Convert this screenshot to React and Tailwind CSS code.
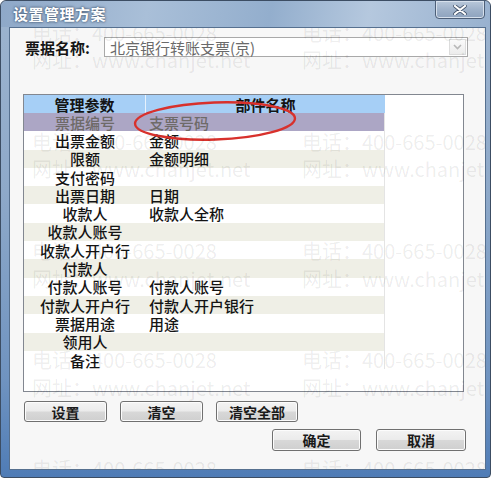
import React from "react"

const rows = [
  ["票据编号", "支票号码"],
  ["出票金额", "金额"],
  ["限额", "金额明细"],
  ["支付密码", ""],
  ["出票日期", "日期"],
  ["收款人", "收款人全称"],
  ["收款人账号", ""],
  ["收款人开户行", ""],
  ["付款人", ""],
  ["付款人账号", "付款人账号"],
  ["付款人开户行", "付款人开户银行"],
  ["票据用途", "用途"],
  ["领用人", ""],
  ["备注", ""],
]

const font = { fontFamily: '"Noto Sans CJK SC", "DejaVu Sans", sans-serif' }

function VistaButton({ children, className = "" }) {
  return (
    <button
      className={`flex items-center justify-center rounded-[3px] border border-[#707070] bg-[linear-gradient(#f3f3f3_0%,#ebebeb_48%,#d8d8d8_52%,#cfcfcf_100%)] text-[14px] font-bold leading-none text-[#1a1a1a] shadow-[inset_0_0_0_1px_#fcfcfc] ${className}`}
    >
      {children}
    </button>
  )
}

function Watermarks() {
  const phoneTops = [-7, 102, 211, 320, 429]
  const webTops = [20, 129, 239, 348]
  const xs = [22, 292]
  return (
    <div className="pointer-events-none absolute inset-0 z-20 overflow-hidden text-[20px] leading-[24px] text-black/[0.08]">
      {phoneTops.map((t) =>
        xs.map((x) => (
          <div key={`p${t}${x}`} className="absolute whitespace-nowrap" style={{ top: t, left: x }}>
            电话：400-665-0028
          </div>
        )),
      )}
      {webTops.map((t) =>
        xs.map((x) => (
          <div key={`w${t}${x}`} className="absolute whitespace-nowrap" style={{ top: t, left: x }}>
            网址：www.chanjet.net
          </div>
        )),
      )}
    </div>
  )
}

export default function App() {
  return (
    <div className="h-[481px] w-[494px] bg-white" style={font}>
      <div className="flex h-[478px] w-[491px] flex-col rounded-t-[6px] rounded-b-[4px] border border-[#3c4d63] bg-[linear-gradient(180deg,#9db4cf_0%,#8ea9c9_40%,#6f93c0_80%,#4f7cb6_100%)] pl-[8px] pr-[4px] pb-[7px]">
        {/* title bar */}
        <div className="relative flex h-[26px] shrink-0 items-center bg-[linear-gradient(100deg,#8ea8c8_0%,#a9bfd8_30%,#93aecd_55%,#b5c8de_75%,#98b1cf_100%)] -mr-[4px] -ml-[8px] pl-[12px] rounded-t-[6px]">
          <span className="text-[15px] font-bold tracking-[0.5px] text-white [text-shadow:0_0_3px_#4a5f7a,0_0_2px_#4a5f7a]">
            设置管理方案
          </span>
          <div className="absolute right-[5px] top-[-1px] flex h-[19px] w-[50px] items-center justify-center rounded-b-[4px] border border-[#4d5f78] bg-[linear-gradient(#b9c8da_0%,#9fb2ca_50%,#8ea3be_100%)] shadow-[inset_0_0_0_1px_#d6e0ec]">
            <svg width="14" height="10" viewBox="0 0 14 10">
              <path d="M2 1 L12 9 M12 1 L2 9" stroke="#3f4f66" strokeWidth="3.6" strokeLinecap="round" />
              <path d="M2 1 L12 9 M12 1 L2 9" stroke="#ffffff" strokeWidth="2.2" strokeLinecap="round" />
            </svg>
          </div>
        </div>

        {/* client area */}
        <div className="relative flex h-[443px] w-[477px] flex-col border border-[#56708f] bg-[#f7f7f7]">
          {/* combo */}
          <div className="mt-[9px] flex h-[20px] items-center">
            <span className="ml-[15px] w-[79px] text-[15px] font-bold leading-none text-[#151515]">票据名称:</span>
            <div className="flex h-[20px] w-[364px] items-center border border-[#a9a9a9] bg-white pl-[5px]">
              <span className="flex-1 text-[15px] leading-none text-[#6a6a6a]">北京银行转账支票(京)</span>
              <div className="mr-[1px] flex h-[16px] w-[17px] items-center justify-center border border-[#dcdcdc] bg-[linear-gradient(#fafafa,#ececec)]">
                <svg width="9" height="6" viewBox="0 0 9 6">
                  <path d="M1 1 L4.5 4.5 L8 1" fill="none" stroke="#b8b8b8" strokeWidth="1.6" />
                </svg>
              </div>
            </div>
          </div>

          {/* list */}
          <div className="relative ml-[13px] mt-[37px] flex h-[298px] w-[441px] border border-[#828790] bg-white">
            <div className="flex w-[361px] flex-col">
              <div className="flex h-[18px] bg-[#a6cff6] text-[15px] font-bold leading-none text-[#141414]">
                <div className="flex w-[122px] items-center justify-center border-r border-[#e6f1fc]">管理参数</div>
                <div className="flex flex-1 items-center justify-center">部件名称</div>
              </div>
              {rows.map(([a, b], i) => {
                const bg = i === 0 ? "bg-[#aca6c5]" : i % 2 === 0 ? "bg-[#efefe6]" : "bg-white"
                const color = i === 0 ? "text-[#6e6a68]" : "text-[#141414]"
                return (
                  <div
                    key={a}
                    className={`flex h-[18.3px] border-r border-[#e4e4e4] text-[15px] font-medium leading-none ${bg} ${color}`}
                  >
                    <div className="flex w-[122px] items-center justify-center whitespace-nowrap">{a}</div>
                    <div className="flex flex-1 items-center pl-[3px] whitespace-nowrap">{b}</div>
                  </div>
                )
              })}
            </div>
            <svg className="pointer-events-none absolute left-[108px] top-[5px] z-10" width="166" height="42" viewBox="0 0 166 42">
              <ellipse cx="83" cy="21" rx="80" ry="18.5" fill="none" stroke="#d8312c" strokeWidth="2.4" transform="rotate(-2 83 21)" />
            </svg>
          </div>

          {/* buttons */}
          <div className="ml-[14px] mt-[9px] flex h-[21px] gap-[13px]">
            <VistaButton className="w-[83px]">设置</VistaButton>
            <VistaButton className="w-[83px]">清空</VistaButton>
            <VistaButton className="w-[82px]">清空全部</VistaButton>
          </div>
          <div className="mt-[7px] flex h-[22px] justify-end gap-[15px] pr-[19px]">
            <VistaButton className="w-[89px]">确定</VistaButton>
            <VistaButton className="w-[90px]">取消</VistaButton>
          </div>

          <Watermarks />
        </div>
      </div>
    </div>
  )
}
